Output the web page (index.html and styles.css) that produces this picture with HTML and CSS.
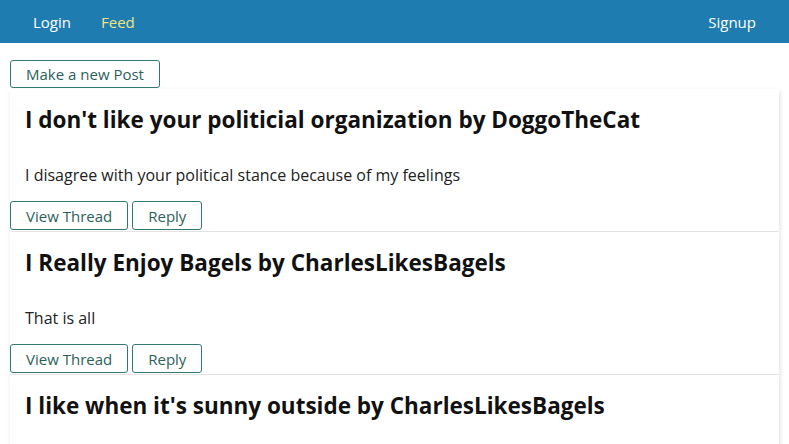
FILE: index.html
```html
<!DOCTYPE html>
<html>
<head>
<meta charset="utf-8">
<link rel="stylesheet" href="styles.css">
</head>
<body>
<nav class="navbar">
  <div class="nav-left">
    <a class="nav-link">Login</a>
    <a class="nav-link active">Feed</a>
  </div>
  <a class="nav-link">Signup</a>
</nav>
<main class="feed">
  <button class="btn">Make a new Post</button>
  <div class="card">
    <div class="card-body">
      <h2 class="title">I don't like your politicial organization by DoggoTheCat</h2>
      <p class="text">I disagree with your political stance because of my feelings</p>
    </div>
    <div class="actions">
      <button class="btn">View Thread</button>
      <button class="btn">Reply</button>
    </div>
  </div>
  <div class="card">
    <div class="card-body">
      <h2 class="title">I Really Enjoy Bagels by CharlesLikesBagels</h2>
      <p class="text">That is all</p>
    </div>
    <div class="actions">
      <button class="btn">View Thread</button>
      <button class="btn">Reply</button>
    </div>
  </div>
  <div class="card card-last">
    <div class="card-body">
      <h2 class="title">I like when it's sunny outside by CharlesLikesBagels</h2>
    </div>
  </div>
</main>
</body>
</html>
```
FILE: styles.css
```css
* { box-sizing: border-box; }
body {
  margin: 0;
  font-family: "Open Sans", sans-serif;
  color: #222;
  background: #fff;
}
.navbar {
  height: 43px;
  background: #1f7cb0;
  display: flex;
  align-items: center;
  justify-content: space-between;
  padding: 0 33px 0 33px;
}
.nav-left { display: flex; gap: 30px; }
.nav-link {
  color: #fff;
  font-size: 15px;
  text-decoration: none;
}
.nav-link.active { color: #efe57f; }
.feed {
  padding: 17px 10px 0 10px;
  display: flex;
  flex-direction: column;
  align-items: flex-start;
}
.btn {
  font-family: "Open Sans", sans-serif;
  font-size: 15px;
  color: #2c5f5b;
  background: #fff;
  border: 1px solid #2f7a71;
  border-radius: 3px;
  padding: 3px 15px 3px 15px;
  line-height: 20px;
  cursor: pointer;
}
.feed > .btn { margin-bottom: 1px; }
.card {
  width: 769px;
  background: #fff;
  box-shadow: 1px 2px 5px rgba(0,0,0,0.13);
  margin-bottom: 1px;
}
.card-last { min-height: 90px; }
.card-body { padding: 14px 15px 0 15px; }
.title {
  margin: 0;
  font-size: 22.5px;
  font-weight: 700;
  line-height: 33px;
  color: #111;
}
.text {
  margin: 28px 0 15px 0;
  font-size: 16px;
  line-height: 22px;
  color: #222;
}
.actions { display: flex; gap: 4px; padding-bottom: 1px; }
.actions .btn { height: 29px; }
```
